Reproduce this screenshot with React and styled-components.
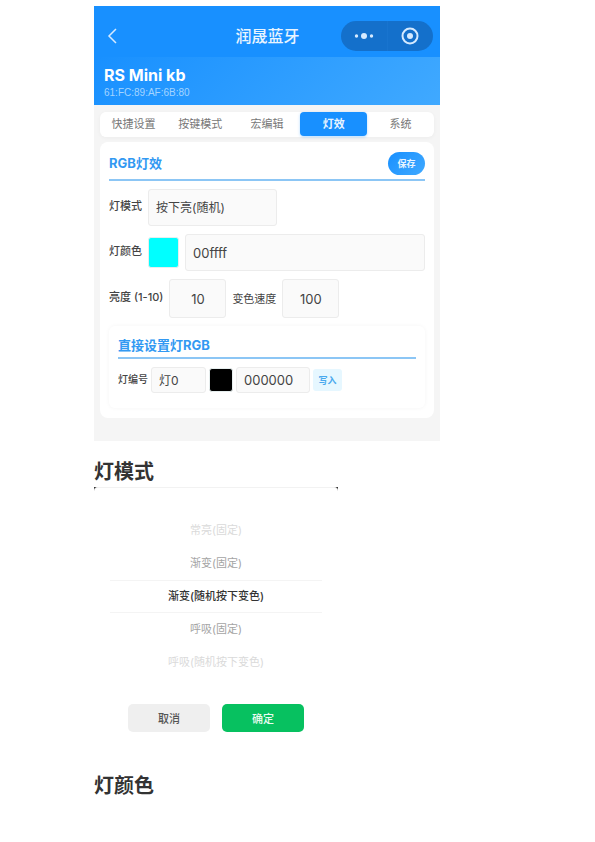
import React, { useState } from "react";
import styled, { createGlobalStyle } from "styled-components";

const GlobalStyle = createGlobalStyle`
  *, *::before, *::after { box-sizing: border-box; }
  body {
    margin: 0;
    background: #fff;
    color: #444;
    font-family: Inter, "Noto Sans CJK SC", sans-serif;
  }
  h1, h2, h3, p, ul { margin: 0; padding: 0; }
  button, input, select { font: inherit; color: inherit; }
  button { border: 0; padding: 0; cursor: pointer; }
`;

const Article = styled.main`
  padding: 6px 155px 40px 94px;
`;

const Phone = styled.section`
  background: #f5f5f5;
  padding-bottom: 23px;
`;

const NavBar = styled.header`
  display: grid;
  grid-template-columns: 1fr auto 1fr;
  align-items: center;
  height: 51px;
  padding: 9px 7px 0 12px;
  background: #1890ff;
  color: #e8f4ff;
`;

const BackButton = styled.button`
  display: flex;
  justify-self: start;
  background: none;
`;

const NavTitle = styled.h1`
  padding-right: 4px;
  font-size: 16px;
  line-height: 20px;
  font-weight: 500;
`;

const Capsule = styled.div`
  display: flex;
  justify-self: end;
  width: 92px;
  height: 30px;
  border-radius: 15px;
  background: #1470cb;
`;

const CapsuleButton = styled.button`
  display: flex;
  flex: 1;
  align-items: center;
  justify-content: center;
  background: none;

  & + & { border-left: 1px solid #1874cf; }
`;

const DeviceBand = styled.div`
  height: 48px;
  padding: 8px 10px 0;
  background: linear-gradient(135deg, #1890ff, #40a9ff);
  color: #fff;
`;

const DeviceName = styled.h2`
  font-size: 16px;
  line-height: 21px;
  font-weight: 700;
`;

const DeviceAddress = styled.p`
  font-family: "Liberation Sans", Arial, sans-serif;
  font-size: 10px;
  line-height: 13px;
  color: #a3d4ff;
`;

const Tabs = styled.nav`
  display: flex;
  height: 25px;
  margin: 7px 6px 5px;
  border-radius: 6px;
  background: #fff;
  box-shadow: 0 1px 4px #0000000a;
`;

const Tab = styled.button`
  flex: 1;
  height: 24px;
  border-radius: 4px;
  font-size: 11px;
  line-height: 25px;
  font-weight: ${(p) => (p.$active ? 700 : 400)};
  color: ${(p) => (p.$active ? "#e8f4ff" : "#777")};
  background: ${(p) => (p.$active ? "#1890ff" : "none")};
  box-shadow: ${(p) => (p.$active ? "0 1px 3px #1890ff55" : "none")};
`;

const Panel = styled.section`
  margin: 0 6px;
  padding: 9px 9px 10px;
  border-radius: 8px;
  background: #fff;
`;

const PanelHeader = styled.div`
  display: flex;
  align-items: center;
  justify-content: space-between;
  height: ${(p) => (p.$compact ? 22 : 30)}px;
  padding-bottom: 4px;
  border-bottom: 2px solid #8cc6f5;
  margin-bottom: 8px;
`;

const PanelTitle = styled.h3`
  font-size: 13px;
  line-height: 18px;
  font-weight: 700;
  color: #3299f2;
`;

const SaveButton = styled.button`
  width: 37px;
  height: 23px;
  border-radius: 12px;
  font-size: 9px;
  font-weight: 700;
  color: #e8f4ff;
  background: linear-gradient(135deg, #1890ff, #40a9ff);
`;

const Row = styled.div`
  display: flex;
  align-items: center;
  gap: ${(p) => (p.$compact ? 3 : 6)}px;
  margin-bottom: ${(p) => (p.$compact ? 0 : 8)}px;
`;

const Label = styled.label`
  flex: none;
  font-size: ${(p) => (p.$small ? 10 : 11)}px;
  line-height: 16px;
  font-weight: ${(p) => (p.$light ? 400 : 500)};
  padding-bottom: ${(p) => (p.$light ? 0 : 3)}px;
`;

const Field = styled.input`
  appearance: none;
  flex: ${(p) => (p.$grow ? 1 : "none")};
  min-width: 0;
  width: ${(p) => p.$width || 57}px;
  height: ${(p) => p.$height || 37}px;
  padding: 0 7px;
  border: 1px solid #ececec;
  border-radius: 3px;
  background: #fafafa;
  font-size: 13px;
  text-align: ${(p) => (p.$center ? "center" : "left")};
  outline-color: #1890ff;
`;

const Picker = styled(Field)`
  font-size: 12px;
`;

const Swatch = styled.button`
  flex: none;
  width: ${(p) => p.$size}px;
  height: ${(p) => p.$size}px;
  border: 1px solid #e6eeee;
  border-radius: 3px;
  background: ${(p) => p.$color};
`;

const InnerCard = styled.section`
  padding: 11px 9px 15px;
  border-radius: 6px;
  box-shadow: 0 0 4px #0000000c;
`;

const WriteButton = styled.button`
  width: 29px;
  height: 22px;
  border-radius: 3px;
  font-size: 9px;
  font-weight: 700;
  color: #4aa9ee;
  background: #e6f7ff;
`;

const Heading = styled.h2`
  font-size: 20px;
  line-height: 30px;
  font-weight: 700;
  color: #333;
`;

const SheetHeading = styled(Heading)`
  margin-top: 16px;
`;

const Sheet = styled.section`
  width: 71%;
  max-width: 244px;
  margin-bottom: 39px;
  background: #333;
`;

const SheetBody = styled.div`
  padding: 26px 16px 0;
  border-top: 1px solid #f2f2f2;
  border-radius: 4px 4px 0 0;
  background: #fff;
`;

const Options = styled.ul`
  list-style: none;
`;

const Option = styled.li`
  height: 33px;
  border: solid #f4f4f4;
  border-width: ${(p) => (p.$distance === 0 ? "1px 0" : "0")};
  font-size: 11px;
  line-height: ${(p) => (p.$distance === 0 ? 31 : 33)}px;
  text-align: center;
  font-weight: ${(p) => (p.$distance === 0 ? 500 : 400)};
  color: ${(p) => ["#333", "#a4a4a4", "#dadada"][p.$distance]};
  cursor: pointer;
`;

const Actions = styled.div`
  display: flex;
  gap: 12px;
  padding: 25px 18px 0;
`;

const ActionButton = styled.button`
  flex: 1;
  height: 28px;
  border-radius: 5px;
  font-size: 11px;
  font-weight: 500;
  color: ${(p) => (p.$primary ? "#e9fbf1" : "#555")};
  background: ${(p) => (p.$primary ? "#07c160" : "#efefef")};
`;

const TABS = ["快捷设置", "按键模式", "宏编辑", "灯效", "系统"];
const MODES = [
  "常亮(固定)",
  "渐变(固定)",
  "渐变(随机按下变色)",
  "呼吸(固定)",
  "呼吸(随机按下变色)",
];

export default function App() {
  const [tab, setTab] = useState("灯效");

  return (
    <>
      <GlobalStyle />
      <Article>
        <Phone>
          <NavBar>
            <BackButton aria-label="返回">
              <svg width="14" height="16" viewBox="0 0 14 16" fill="none" stroke="#d5eaff" strokeWidth="1.5">
                <path d="M10 1 3 8l7 7" />
              </svg>
            </BackButton>
            <NavTitle>润晟蓝牙</NavTitle>
            <Capsule>
              <CapsuleButton aria-label="更多">
                <svg width="20" height="8" viewBox="0 0 20 8" fill="#d5eaff">
                  <circle cx="2.5" cy="4" r="1.7" />
                  <circle cx="10" cy="4" r="3" />
                  <circle cx="17.5" cy="4" r="1.7" />
                </svg>
              </CapsuleButton>
              <CapsuleButton aria-label="关闭">
                <svg width="18" height="18" viewBox="0 0 18 18">
                  <circle cx="9" cy="9" r="7.5" fill="none" stroke="#d5eaff" strokeWidth="2" />
                  <circle cx="9" cy="9" r="3" fill="#d5eaff" />
                </svg>
              </CapsuleButton>
            </Capsule>
          </NavBar>
          <DeviceBand>
            <DeviceName>RS Mini kb</DeviceName>
            <DeviceAddress>61:FC:89:AF:6B:80</DeviceAddress>
          </DeviceBand>
          <Tabs>
            {TABS.map((name) => (
              <Tab key={name} $active={name === tab} onClick={() => setTab(name)}>
                {name}
              </Tab>
            ))}
          </Tabs>
          <Panel>
            <PanelHeader>
              <PanelTitle>RGB灯效</PanelTitle>
              <SaveButton>保存</SaveButton>
            </PanelHeader>
            <Row>
              <Label htmlFor="mode">灯模式</Label>
              <Picker as="select" id="mode" $width={129}>
                <option>按下亮(随机)</option>
              </Picker>
            </Row>
            <Row>
              <Label htmlFor="color">灯颜色</Label>
              <Swatch $size={31} $color="#00ffff" aria-label="选择灯颜色" />
              <Field id="color" $grow defaultValue="00ffff" />
            </Row>
            <Row>
              <Label htmlFor="brightness">亮度 (1-10)</Label>
              <Field id="brightness" $center $height={39} defaultValue="10" />
              <Label htmlFor="speed" $light>变色速度</Label>
              <Field id="speed" $center $height={39} defaultValue="100" />
            </Row>
            <InnerCard>
              <PanelHeader $compact>
                <PanelTitle>直接设置灯RGB</PanelTitle>
              </PanelHeader>
              <Row $compact>
                <Label htmlFor="lamp" $small>灯编号</Label>
                <Picker as="select" id="lamp" $width={55} $height={26}>
                  <option>灯0</option>
                </Picker>
                <Swatch $size={24} $color="#000" aria-label="选择颜色" />
                <Field aria-label="颜色值" $width={74} $height={26} defaultValue="000000" />
                <WriteButton>写入</WriteButton>
              </Row>
            </InnerCard>
          </Panel>
        </Phone>

        <SheetHeading>灯模式</SheetHeading>
        <Sheet>
          <SheetBody>
            <Options role="listbox" aria-label="灯模式">
              {MODES.map((name, i) => (
                <Option key={name} role="option" aria-selected={i === 2} $distance={Math.abs(i - 2)}>
                  {name}
                </Option>
              ))}
            </Options>
            <Actions>
              <ActionButton>取消</ActionButton>
              <ActionButton $primary>确定</ActionButton>
            </Actions>
          </SheetBody>
        </Sheet>
        <Heading>灯颜色</Heading>
      </Article>
    </>
  );
}
